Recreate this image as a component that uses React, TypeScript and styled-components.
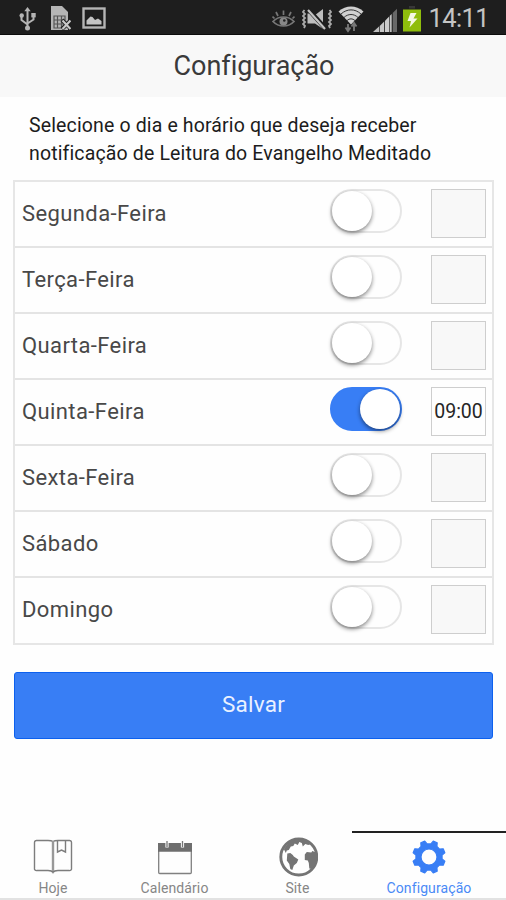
import React from "react";
import styled, { createGlobalStyle } from "styled-components";

const GlobalStyle = createGlobalStyle`
  * { box-sizing: border-box; }
  body { margin: 0; background: #fefefe; font-family: Roboto, "Liberation Sans", sans-serif; }
`;

const Screen = styled.div`
  width: 506px;
  height: 900px;
  display: flex;
  flex-direction: column;
  background: #fefefe;
  overflow: hidden;
`;

const StatusBar = styled.header`
  height: 35px;
  flex: none;
  display: flex;
  align-items: center;
  justify-content: space-between;
  padding: 0 17px 0 19px;
  background: #1e1e1e;
  border-bottom: 1px solid #0c0c0c;
  svg { display: block; }
`;

const StatusGroup = styled.div`
  display: flex;
  align-items: center;
  height: 35px;
`;

const Clock = styled.span`
  margin-left: 7px;
  padding-top: 3px;
  font-size: 25.5px;
  line-height: 35px;
  letter-spacing: -0.6px;
  color: #c4c4c4;
`;

const TitleBar = styled.h1`
  height: 62px;
  flex: none;
  margin: 0;
  padding-left: 2px;
  background: #f8f8f8;
  color: #3a3a3a;
  font-size: 27px;
  font-weight: 400;
  line-height: 62px;
  letter-spacing: -0.05px;
  text-align: center;
`;

const Intro = styled.p`
  margin: 15px 0 0 29px;
  height: 68px;
  font-size: 19.5px;
  line-height: 28px;
  letter-spacing: 0.14px;
  color: #1c1c1c;
  white-space: nowrap;
`;

const DayList = styled.ul`
  list-style: none;
  margin: 0 12px 0 13px;
  padding: 0;
  border: 2px solid #e6e6e6;
`;

const DayRow = styled.li`
  height: 66px;
  display: flex;
  align-items: flex-start;
  padding: 7px 6px 0 7px;
  border-top: 2px solid #e4e4e4;
  &:first-child { height: 64px; border-top: 0; }
  &:last-child { height: 67px; }
`;

const DayName = styled.span`
  flex: 1;
  line-height: 50px;
  font-size: 22px;
  letter-spacing: 0.4px;
  color: #484848;
`;

const Toggle = styled.span<{ $on: boolean }>`
  width: 72px;
  height: 44px;
  display: flex;
  justify-content: ${(p) => (p.$on ? "flex-end" : "flex-start")};
  border: 2px solid ${(p) => (p.$on ? "#387ef5" : "#e6e6e6")};
  border-radius: 22px;
  background: ${(p) => (p.$on ? "#387ef5" : "#fefefe")};
`;

const Knob = styled.span`
  width: 40px;
  height: 40px;
  border-radius: 50%;
  background: #fff;
  box-shadow: 0 2px 4px rgba(0, 0, 0, 0.48);
`;

const TimeBox = styled.span<{ $on: boolean }>`
  width: 55px;
  height: 49px;
  margin-left: 29px;
  border: 1.5px solid #cecece;
  background: ${(p) => (p.$on ? "#fefefe" : "#f8f8f8")};
  color: #262626;
  font-size: 19.5px;
  line-height: 48px;
  text-align: center;
`;

const SaveButton = styled.button`
  height: 67px;
  margin: 27px 13px 0 14px;
  padding: 0 0 3px;
  border: 1px solid #0c60ee;
  border-radius: 3px;
  background: #387ef5;
  color: #eaf1ff;
  font: 400 22.5px Roboto, sans-serif;
  letter-spacing: 0.25px;
`;

const TabBar = styled.nav`
  margin-top: auto;
  height: 69px;
  flex: none;
  display: grid;
  grid-template-columns: 106px 137px 109px 154px;
  border-bottom: 2px solid #e2e2e2;
`;

const Tab = styled.div<{ $active?: boolean }>`
  display: flex;
  flex-direction: column;
  align-items: center;
  border-top: 2px solid ${(p) => (p.$active ? "#222" : "transparent")};
  color: ${(p) => (p.$active ? "#4a8af6" : "#868686")};
  svg { display: block; margin-top: 4px; }
`;

const TabLabel = styled.span`
  margin-top: 2px;
  font-size: 14px;
  line-height: 18px;
  letter-spacing: 0.1px;
`;

const UsbIcon = () => (
  <svg width="18" height="26" viewBox="0 0 18 26" fill="none" stroke="#b5b5b5" strokeWidth="2">
    <path d="M8.500 4v18M8.500 18.500L2.500 14v-4M8.500 17.500l6-4V9" />
    <path d="M5.300 5.200L8.500 1l3.200 4.200z" fill="#b5b5b5" stroke="none" />
    <circle cx="8.500" cy="22" r="2.500" fill="#b5b5b5" stroke="none" />
    <circle cx="2.700" cy="9.500" r="2.200" fill="#b5b5b5" stroke="none" />
    <rect x="12.300" y="7" width="4.400" height="4.400" fill="#b5b5b5" stroke="none" />
  </svg>
);

const SimIcon = () => (
  <svg width="21" height="26" viewBox="0 0 21 26">
    <path d="M1 1h11l6 6v18H1z" fill="#b5b5b5" />
    <path d="M4 11h11v12H4zM4 15h11M4 19h11M7.500 11v12M11.500 11v12" fill="none" stroke="#555" strokeWidth="1.200" />
    <path d="M12 15l9 9M21 15l-9 9" stroke="#1e1e1e" strokeWidth="4" />
    <path d="M12.500 15.500l8 8.500M20.500 15.500l-8 8.500" stroke="#c8c8c8" strokeWidth="2.200" />
  </svg>
);

const PictureIcon = () => (
  <svg width="24" height="22" viewBox="0 0 24 22">
    <rect x="1.500" y="1.500" width="21" height="19" fill="none" stroke="#b5b5b5" strokeWidth="2.400" />
    <path d="M4.500 17.500v-4l4-4 2 .5 2.500 3 3-1.500 3.500 2.500v3.500z" fill="#c4c4c4" />
  </svg>
);

const EyeIcon = () => (
  <svg width="23" height="20" viewBox="0 0 23 20" fill="none" stroke="#777" strokeWidth="1.700">
    <path d="M1 12.500c5.500-6 15.500-6 21 0-5.500 6-15.500 6-21 0z" />
    <circle cx="11.500" cy="12.500" r="4" fill="#888" stroke="none" />
    <path d="M11.500 6V1.500M6 7L4 3M17 7l2-4M2.500 9.500L.5 7.500M20.500 9.500l2-2" />
    <circle cx="12.300" cy="11.500" r="1.300" fill="#222" stroke="none" />
  </svg>
);

const MuteIcon = () => (
  <svg width="30" height="22" viewBox="0 0 30 22">
    <path d="M5.500 5.500h5l2 2L21 1v20l-8-5.500H5.500z" fill="#bdbdbd" />
    <path d="M6 1l17 19" stroke="#1e1e1e" strokeWidth="4.600" />
    <path d="M6 2l17 19" stroke="#c2c2c2" strokeWidth="2.200" />
    <path d="M2.500 2l-1.500 2 2 2-2 2 2 2-2 2 2 2-2 2 2 2-1 2M27.500 2l1.500 2-2 2 2 2-2 2 2 2-2 2 2 2-2 2 1 2" fill="none" stroke="#aaa" strokeWidth="1.800" />
  </svg>
);

const WifiIcon = () => (
  <svg width="26" height="28" viewBox="0 0 26 28">
    <path d="M.5 6.500C8-.3 18-.3 25.500 6.500L13 19.500z" fill="#d0d0d0" />
    <g fill="none" stroke="#333" strokeWidth="1">
      <path d="M3 9c6-5.500 14-5.500 20 0M6 12.500c4-4 10-4 14 0M9 15.600c2.500-2.300 5.500-2.300 8 0" />
    </g>
    <path d="M10 19v7M7.500 22.500L10 26l2.500-3.500M16 26v-7M13.500 21.500L16 18l2.500 3.500" fill="none" stroke="#777" strokeWidth="1.900" />
  </svg>
);

const SignalIcon = () => (
  <svg width="25" height="24" viewBox="0 0 25 24">
    <path d="M0 24l6-5.600V24z" fill="#bdbdbd" />
    <path d="M6.700 17.900l4.500-4.300V24H6.700z" fill="#c8c8c8" />
    <path d="M12 12.700l4.200-4.200V24H12z" fill="#ccc" />
    <path d="M16.800 7.800l1.900-1.800V24h-1.900z" fill="#c0c0c0" />
    <path d="M19.700 4.900L24 .8V24h-4.300z" fill="#686868" />
  </svg>
);

const BatteryIcon = () => (
  <svg width="18" height="26" viewBox="0 0 18 26">
    <rect x="6" y="0" width="6" height="2.500" fill="#383838" />
    <rect x="0" y="3.500" width="18" height="22" fill="#8fbd0c" />
    <path d="M7.500 7h6l-3 5.500h4L6.500 21.500l1.500-6.500H4.500z" fill="#f4f8e4" />
  </svg>
);

const BookIcon = () => (
  <svg width="40" height="40" viewBox="0 0 40 40" fill="none" stroke="#7d7d7d" strokeWidth="1.400">
    <path d="M20 4.500C18.500 3.500 17 3.500 15 3.500H4A2 2 0 0 0 1.500 5.500V31a2 2 0 0 0 2.500 2.500h11c2 0 4 0 5 2 1-2 3-2 5-2h11a2 2 0 0 0 2.500-2.500V5.500A2 2 0 0 0 36 3.500H25c-2 0-3.500 0-5 1z" />
    <path d="M20 4v30" strokeWidth="2.400" stroke="#999" />
    <path d="M24.500 4v11l4-2 4 2V4" />
  </svg>
);

const CalendarIcon = () => (
  <svg width="40" height="40" viewBox="0 0 40 40">
    <rect x="3.700" y="7.500" width="32.600" height="29" rx="1" fill="none" stroke="#808080" strokeWidth="1.300" />
    <path d="M3 6h34v8.700H3z" fill="#6e6e6e" />
    <path d="M12 4.500V10.500M27.500 4.500V10.500" stroke="#fefefe" strokeWidth="3.200" />
    <path d="M12 4v6M27.500 4v6" stroke="#777" strokeWidth="1.300" />
  </svg>
);

const EarthIcon = () => (
  <svg width="40" height="40" viewBox="-0.800 0 40 40">
    <circle cx="20" cy="20" r="18" fill="none" stroke="#747474" strokeWidth="2.900" />
    <g fill="#747474">
      <path d="M5 12L10 5.500 18 2l9 .5 6 4-3.500 1.500-3-1-2.500 2.500-1-3.500-2.500-1-1.500 3-3-1.500-1.500 2.500-2.500.5-2 3.500-2 .5-1 2.500z" />
      <path d="M8.500 16.500l3-.5 2.500 2 1 1.500 4.500 3-1.500 3.500-3 2.500-1.500 4.500-2-1-1-5-2.500-3.500z" />
      <path d="M26 17.500l2-2.500 4.500.5 1-1.500 4 1.500.5 5-2 6.500-3.500 5-2-.5-.5-5.500-1-2.500-3-.5z" />
    </g>
  </svg>
);

const gearPath =
  Array.from({ length: 8 }, (_, k) => {
    const mid = 22.5 + 45 * k;
    return [[-14.5, 13.2], [-7.5, 16.4], [7.5, 16.4], [14.5, 13.2]]
      .map(([offset, radius], i) => {
        const angle = ((mid + offset) * Math.PI) / 180;
        const x = (20 + radius * Math.cos(angle)).toFixed(2);
        const y = (20 + radius * Math.sin(angle)).toFixed(2);
        return (k === 0 && i === 0 ? "M" : "L") + x + " " + y;
      })
      .join("");
  }).join("") + "ZM20 12a8 8 0 1 0 0 16a8 8 0 1 0 0-16Z";

const GearIcon = () => (
  <svg width="40" height="40" viewBox="0 0 40 40">
    <path d={gearPath} fill="#387ef5" fillRule="evenodd" stroke="#387ef5" strokeWidth="1.200" strokeLinejoin="round" />
  </svg>
);

const StatusIcon = styled.span<{ $gap?: number; $top?: number }>`
  margin-left: ${(p) => p.$gap ?? 0}px;
  padding-top: ${(p) => p.$top ?? 0}px;
`;

const days = [
  { name: "Segunda-Feira" },
  { name: "Terça-Feira" },
  { name: "Quarta-Feira" },
  { name: "Quinta-Feira", time: "09:00" },
  { name: "Sexta-Feira" },
  { name: "Sábado" },
  { name: "Domingo" },
];

export default function App() {
  return (
    <Screen>
      <GlobalStyle />
      <StatusBar>
        <StatusGroup>
          <StatusIcon $top={3}><UsbIcon /></StatusIcon>
          <StatusIcon $gap={13} $top={2}><SimIcon /></StatusIcon>
          <StatusIcon $gap={11} $top={2}><PictureIcon /></StatusIcon>
        </StatusGroup>
        <StatusGroup>
          <StatusIcon $top={4}><EyeIcon /></StatusIcon>
          <StatusIcon $gap={7} $top={4}><MuteIcon /></StatusIcon>
          <StatusIcon $gap={6} $top={3}><WifiIcon /></StatusIcon>
          <StatusIcon $gap={9} $top={6}><SignalIcon /></StatusIcon>
          <StatusIcon $gap={5} $top={4}><BatteryIcon /></StatusIcon>
          <Clock>14:11</Clock>
        </StatusGroup>
      </StatusBar>
      <TitleBar>Configuração</TitleBar>
      <Intro>
        Selecione o dia e horário que deseja receber
        <br />
        notificação de Leitura do Evangelho Meditado
      </Intro>
      <DayList>
        {days.map((day) => (
          <DayRow key={day.name}>
            <DayName>{day.name}</DayName>
            <Toggle $on={!!day.time} role="switch" aria-checked={!!day.time}>
              <Knob />
            </Toggle>
            <TimeBox $on={!!day.time}>{day.time}</TimeBox>
          </DayRow>
        ))}
      </DayList>
      <SaveButton>Salvar</SaveButton>
      <TabBar>
        <Tab><BookIcon /><TabLabel>Hoje</TabLabel></Tab>
        <Tab><CalendarIcon /><TabLabel>Calendário</TabLabel></Tab>
        <Tab><EarthIcon /><TabLabel>Site</TabLabel></Tab>
        <Tab $active><GearIcon /><TabLabel>Configuração</TabLabel></Tab>
      </TabBar>
    </Screen>
  );
}
